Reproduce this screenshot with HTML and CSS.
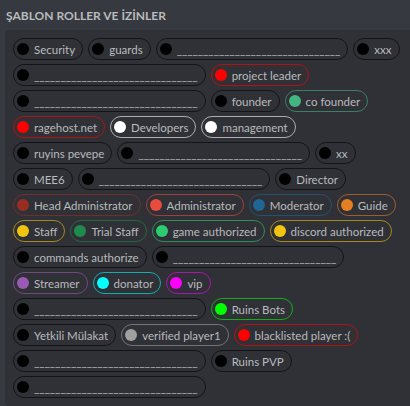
FILE: index.html
```html
<!DOCTYPE html>
<html lang="tr">
    <head>
        <meta charset="UTF-8">
        <title>Şablon Roller</title>
        <link rel="stylesheet" href="styles.css">
    </head>
    <body>
        <h2 class="title">ŞABLON ROLLER VE İZİNLER</h2>
        <div class="box">
            <ul class="row">
                <li class="role"><span class="dot"></span>Security</li>
                <li class="role"><span class="dot"></span>guards</li>
                <li class="role"><span class="dot"></span>_______________________________</li>
                <li class="role"><span class="dot"></span>xxx</li>
            </ul>
            <ul class="row">
                <li class="role"><span class="dot"></span>_______________________________</li>
                <li class="role red"><span class="dot"></span>project leader</li>
            </ul>
            <ul class="row">
                <li class="role"><span class="dot"></span>_______________________________</li>
                <li class="role"><span class="dot"></span>founder</li>
                <li class="role cofounder"><span class="dot"></span>co founder</li>
            </ul>
            <ul class="row">
                <li class="role red"><span class="dot"></span>ragehost.net</li>
                <li class="role white"><span class="dot"></span>Developers</li>
                <li class="role white"><span class="dot"></span>management</li>
            </ul>
            <ul class="row">
                <li class="role"><span class="dot"></span>ruyins pevepe</li>
                <li class="role"><span class="dot"></span>_______________________________</li>
                <li class="role"><span class="dot"></span>xx</li>
            </ul>
            <ul class="row">
                <li class="role"><span class="dot"></span>MEE6</li>
                <li class="role"><span class="dot"></span>_______________________________</li>
                <li class="role"><span class="dot"></span>Director</li>
            </ul>
            <ul class="row">
                <li class="role headadmin"><span class="dot"></span>Head Administrator</li>
                <li class="role admin"><span class="dot"></span>Administrator</li>
                <li class="role moderator"><span class="dot"></span>Moderator</li>
                <li class="role guide"><span class="dot"></span>Guide</li>
            </ul>
            <ul class="row">
                <li class="role yellow"><span class="dot"></span>Staff</li>
                <li class="role trial"><span class="dot"></span>Trial Staff</li>
                <li class="role game"><span class="dot"></span>game authorized</li>
                <li class="role yellow"><span class="dot"></span>discord authorized</li>
            </ul>
            <ul class="row">
                <li class="role"><span class="dot"></span>commands authorize</li>
                <li class="role"><span class="dot"></span>_______________________________</li>
            </ul>
            <ul class="row">
                <li class="role streamer"><span class="dot"></span>Streamer</li>
                <li class="role cyan"><span class="dot"></span>donator</li>
                <li class="role magenta"><span class="dot"></span>vip</li>
            </ul>
            <ul class="row">
                <li class="role"><span class="dot"></span>_______________________________</li>
                <li class="role lime"><span class="dot"></span>Ruins Bots</li>
            </ul>
            <ul class="row">
                <li class="role"><span class="dot"></span>Yetkili Mülakat</li>
                <li class="role grey"><span class="dot"></span>verified player1</li>
                <li class="role red"><span class="dot"></span>blacklisted player :(</li>
            </ul>
            <ul class="row">
                <li class="role"><span class="dot"></span>_______________________________</li>
                <li class="role"><span class="dot"></span>Ruins PVP</li>
            </ul>
            <ul class="row">
                <li class="role"><span class="dot"></span>_______________________________</li>
            </ul>
        </div>
    </body>
</html>
```

FILE: styles.css
```css
*{
    margin: 0;
    padding: 0;
    box-sizing: border-box;
}
body{
    background-color: #36393f;
    font-family: Lato, "Liberation Sans", sans-serif;
    padding: 8px 0 0 5px;
    overflow: hidden;
}
.title{
    font-size: 12px;
    font-weight: bold;
    color: #b9bbbe;
    line-height: 16px;
    padding-left: 1px;
    margin-bottom: 6px;
}
.box{
    background-color: #2f3136;
    border-radius: 4px 0 0 4px;
    padding: 8px 10px 8px 8px;
    width: 405px;
    display: flex;
    flex-direction: column;
    gap: 4px;
}
.row{
    list-style: none;
    display: flex;
    gap: 5px;
}
.role{
    --c: #000000;
    display: flex;
    align-items: center;
    height: 22px;
    padding: 0 7px 0 3px;
    border: 1px solid color-mix(in srgb, var(--c) 60%, #2f3136);
    border-radius: 11px;
    color: #b9bbbe;
    font-size: 11.5px;
    white-space: nowrap;
}
.dot{
    width: 12px;
    height: 12px;
    border-radius: 50%;
    background-color: var(--c);
    margin-right: 5px;
}
.red{ --c: #ff0000; }
.white{ --c: #ffffff; }
.cofounder{ --c: #43b581; }
.headadmin{ --c: #992d22; }
.admin{ --c: #e74c3c; }
.moderator{ --c: #206694; }
.guide{ --c: #e67e22; }
.yellow{ --c: #f1c40f; }
.trial{ --c: #1f8b4c; }
.game{ --c: #2ecc71; }
.streamer{ --c: #9b59b6; }
.cyan{ --c: #00ffff; }
.magenta{ --c: #ff00ff; }
.lime{ --c: #00ff00; }
.grey{ --c: #a0a0a0; }
```
